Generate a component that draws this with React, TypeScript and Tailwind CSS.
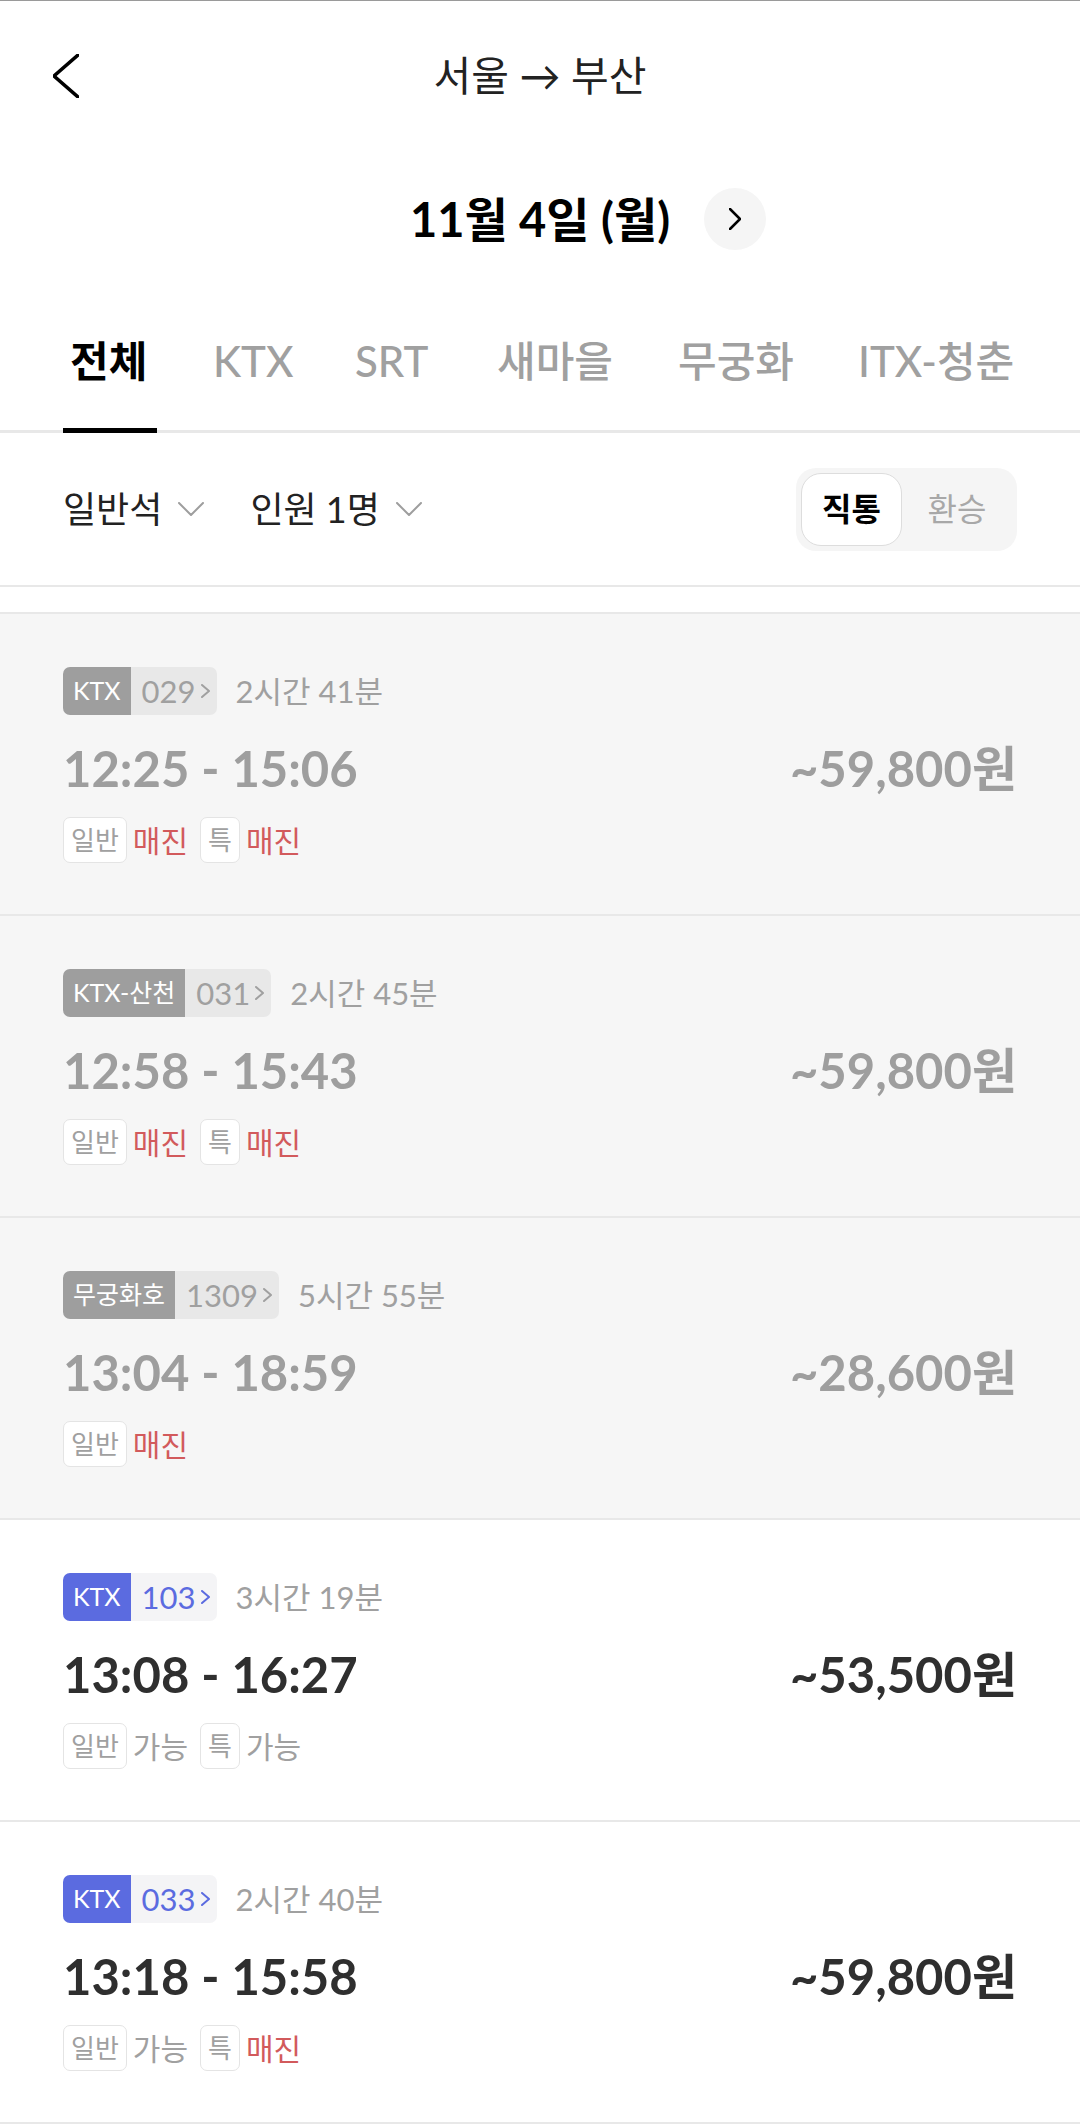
import React from 'react';

type Seat = { label: string; status: '매진' | '가능' };

interface Train {
  type: string;
  no: string;
  duration: string;
  time: string;
  price: string;
  seats: Seat[];
  soldOut: boolean;
}

const TRAINS: Train[] = [
  { type: 'KTX', no: '029', duration: '2시간 41분', time: '12:25 - 15:06', price: '~59,800원', seats: [{ label: '일반', status: '매진' }, { label: '특', status: '매진' }], soldOut: true },
  { type: 'KTX-산천', no: '031', duration: '2시간 45분', time: '12:58 - 15:43', price: '~59,800원', seats: [{ label: '일반', status: '매진' }, { label: '특', status: '매진' }], soldOut: true },
  { type: '무궁화호', no: '1309', duration: '5시간 55분', time: '13:04 - 18:59', price: '~28,600원', seats: [{ label: '일반', status: '매진' }], soldOut: true },
  { type: 'KTX', no: '103', duration: '3시간 19분', time: '13:08 - 16:27', price: '~53,500원', seats: [{ label: '일반', status: '가능' }, { label: '특', status: '가능' }], soldOut: false },
  { type: 'KTX', no: '033', duration: '2시간 40분', time: '13:18 - 15:58', price: '~59,800원', seats: [{ label: '일반', status: '가능' }, { label: '특', status: '매진' }], soldOut: false },
];

// tab label + fixed slot width so the labels land where the app puts them
const TABS: { label: string; w: string }[] = [
  { label: '전체', w: 'w-[143px]' },
  { label: 'KTX', w: 'w-[142px]' },
  { label: 'SRT', w: 'w-[142px]' },
  { label: '새마을', w: 'w-[181px]' },
  { label: '무궁화', w: 'w-[180px]' },
  { label: 'ITX-청춘', w: 'w-auto' },
];

const Chevron = ({ className, dir = 'right', w = 10, h = 16, sw = 2 }: { className?: string; dir?: 'right' | 'left' | 'down'; w?: number; h?: number; sw?: number }) => {
  const d =
    dir === 'right'
      ? `M1 1 L${w - 1} ${h / 2} L1 ${h - 1}`
      : dir === 'left'
        ? `M${w - 1} 1 L1 ${h / 2} L${w - 1} ${h - 1}`
        : `M1 1 L${w / 2} ${h - 1} L${w - 1} 1`;
  return (
    <svg width={w} height={h} viewBox={`0 0 ${w} ${h}`} className={className} fill="none">
      <path d={d} stroke="currentColor" strokeWidth={sw} strokeLinecap="round" strokeLinejoin="round" />
    </svg>
  );
};

function TrainCard({ t }: { t: Train }) {
  const sold = t.soldOut;
  return (
    <div className={`h-[302px] border-b-2 border-[#e8e8e8] px-[63px] pt-[53px] ${sold ? 'bg-[#f6f6f6]' : 'bg-white'}`}>
      {/* badge row */}
      <div className="flex items-center h-[48px]">
        <div className="flex h-[48px] rounded-[7px] overflow-hidden">
          <div className={`flex items-center px-[10px] text-[25px] text-white ${sold ? 'bg-[#9e9e9e]' : 'bg-[#5b6be0]'}`}>{t.type}</div>
          <div className={`flex items-center gap-[5px] pl-[11px] pr-[7px] text-[31px] ${sold ? 'bg-[#e8e8e8] text-[#a0a0a0]' : 'bg-[#f4f4f6] text-[#5b6be0]'}`}>
            <span>{t.no}</span>
            <Chevron w={9} h={14} sw={2} />
          </div>
        </div>
        <span className="ml-[19px] text-[31px] text-[#a0a0a0]">{t.duration}</span>
      </div>
      {/* time row */}
      <div className={`mt-[28px] flex h-[50px] items-center justify-between text-[49px] font-bold leading-[50px] ${sold ? 'text-[#9e9e9e]' : 'text-[#2f2f2f]'}`}>
        <span>{t.time}</span>
        <span>{t.price}</span>
      </div>
      {/* seats */}
      <div className="mt-[24px] flex items-center gap-[12px]">
        {t.seats.map((s) => (
          <div key={s.label} className="flex items-center gap-[6px]">
            <span className="flex h-[46px] items-center rounded-[7px] border-[1.5px] border-[#e4e4e4] bg-white px-[7px] text-[26px] text-[#a0a0a0]">{s.label}</span>
            <span className={`text-[30px] ${s.status === '매진' ? 'text-[#d25a5c]' : 'text-[#a0a0a0]'}`}>{s.status}</span>
          </div>
        ))}
      </div>
    </div>
  );
}

export default function App() {
  return (
    <div className="w-[1080px] min-h-[2124px] bg-white font-[Lato,'Noto_Sans_CJK_KR',sans-serif] border-t border-[#9a9a9a]">
      {/* header */}
      <div className="relative flex h-[149px] items-center justify-center">
        <button className="absolute left-[53px] top-[53px] text-black">
          <Chevron dir="left" w={26} h={44} sw={3.5} />
        </button>
        <h1 className="text-[41px] text-[#222]">서울 → 부산</h1>
      </div>

      {/* date */}
      <div className="mt-[38px] flex h-[62px] items-center justify-center pl-[96px]">
        <span className="text-[47px] font-bold text-black">11월 4일 (월)</span>
        <button className="ml-[34px] flex h-[62px] w-[62px] items-center justify-center rounded-full bg-[#f5f5f5] text-black">
          <Chevron w={12} h={22} sw={2.5} />
        </button>
      </div>

      {/* tabs */}
      <div className="flex border-b-[3px] border-[#e8e8e8] pl-[70px]">
        {TABS.map((tab, i) => (
          <div key={tab.label} className={`relative ${tab.w} pt-[87px] pb-[45px] text-[42px] leading-[48px] ${i === 0 ? 'font-bold text-black' : 'font-medium text-[#a0a0a0]'}`}>
            {tab.label}
            {i === 0 && <span className="absolute bottom-[-3px] left-[-7px] h-[5px] w-[94px] bg-black" />}
          </div>
        ))}
      </div>

      {/* filters */}
      <div className="flex h-[154px] items-center justify-between border-b-2 border-[#e8e8e8] px-[63px]">
        <div className="flex items-center">
          <span className="text-[36px] text-[#222]">일반석</span>
          <Chevron dir="down" w={26} h={14} sw={2} className="ml-[16px] text-[#9e9e9e]" />
          <span className="ml-[46px] text-[36px] text-[#222]">인원 1명</span>
          <Chevron dir="down" w={26} h={14} sw={2} className="ml-[16px] text-[#9e9e9e]" />
        </div>
        <div className="flex rounded-[20px] bg-[#f5f5f5] p-[5px]">
          <div className="flex h-[73px] w-[101px] items-center justify-center rounded-[20px] border-[1.5px] border-[#dddddd] bg-white text-[32px] font-bold text-black">직통</div>
          <div className="flex h-[73px] w-[110px] items-center justify-center text-[32px] text-[#a8a8a8]">환승</div>
        </div>
      </div>
      <div className="h-[27px] border-b-2 border-[#e8e8e8]" />

      {TRAINS.map((t, i) => (
        <TrainCard key={i} t={t} />
      ))}
    </div>
  );
}
